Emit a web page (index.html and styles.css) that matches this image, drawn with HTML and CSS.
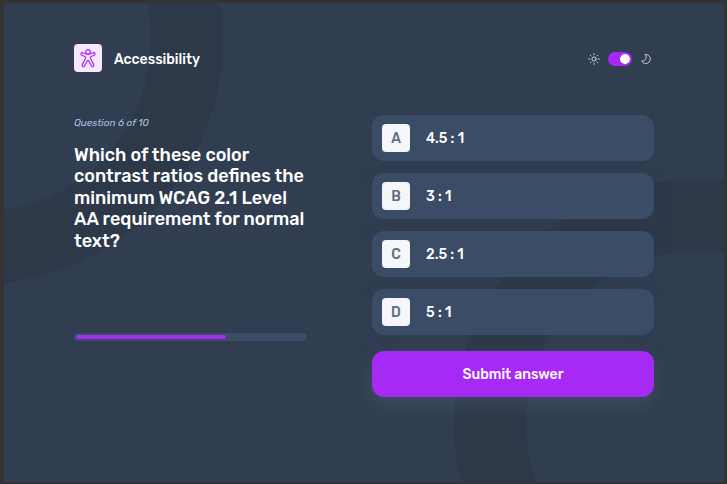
FILE: index.html
```html
<!DOCTYPE html>
<html lang="en">
<head>
<meta charset="utf-8">
<title>Accessibility quiz</title>
<link rel="stylesheet" href="styles.css">
</head>
<body>
<div class="app">
  <svg class="backdrop" viewBox="0 0 720 479" aria-hidden="true">
    <circle cx="-25" cy="37" r="208"/>
    <circle cx="694" cy="420" r="208"/>
  </svg>
  <header class="header">
    <div class="subject">
      <span class="subject-icon">
        <svg viewBox="0 0 28 28" aria-hidden="true">
          <circle cx="14" cy="8" r="2.3"/>
          <path d="M11.6 9.8 8.7 8.7C7 8.2 6.2 10.5 7.8 11.2L10.9 12.5C11.7 12.9 11.8 13.6 11.5 14.5L8.3 20.6C7.6 22.4 9.8 23.3 10.6 21.7L13.5 16.7Q14 15.8 14.5 16.7L17.4 21.7C18.2 23.3 20.4 22.4 19.7 20.6L16.5 14.5C16.2 13.6 16.3 12.9 17.1 12.5L20.2 11.2C21.8 10.5 21 8.2 19.3 8.7L16.4 9.8Q14 10.7 11.6 9.8Z"/>
        </svg>
      </span>
      <span class="subject-name">Accessibility</span>
    </div>
    <div class="theme">
      <svg class="theme-icon" viewBox="0 0 12 12" aria-hidden="true">
        <circle cx="6" cy="6" r="2.1"/>
        <path d="M6 .6v1.2M6 10.2v1.2M.6 6h1.2M10.2 6h1.2M2.2 2.2l.8.8M9 9l.8.8M9.8 2.2 9 3M3 9l-.8.8"/>
      </svg>
      <span class="switch"><span class="knob"></span></span>
      <svg class="theme-icon" viewBox="0 0 12 12" aria-hidden="true">
        <path d="M5.5 1.7C8 1.1 10.3 3.3 10.3 5.9 10.3 8.6 8.3 10.5 5.8 10.5 4 10.5 2.4 9.5 1.8 7.9 3.3 8.2 4.7 7.7 5.5 6.3 6.4 4.8 6.3 3.1 5.5 1.7Z"/>
      </svg>
    </div>
  </header>
  <main class="main">
    <section class="question">
      <p class="count">Question 6 of 10</p>
      <h1 class="title">Which of these color<br>contrast ratios defines the<br>minimum WCAG 2.1 Level<br>AA requirement for normal<br>text?</h1>
      <div class="progress"><div class="bar"></div></div>
    </section>
    <section class="answers">
      <div class="option"><span class="letter">A</span><span class="value">4.5 : 1</span></div>
      <div class="option"><span class="letter">B</span><span class="value">3 : 1</span></div>
      <div class="option"><span class="letter">C</span><span class="value">2.5 : 1</span></div>
      <div class="option"><span class="letter">D</span><span class="value">5 : 1</span></div>
      <button class="submit">Submit answer</button>
    </section>
  </main>
</div>
</body>
</html>
```
FILE: styles.css
```css
* { box-sizing: border-box; margin: 0; }
body {
  background: #333;
  padding: 3px 3px 2px 4px;
  height: 484px;
  overflow: hidden;
  font-family: Rubik, Roboto, sans-serif;
  font-weight: 500;
  color: #fff;
}
.app {
  position: relative;
  width: 720px;
  height: 479px;
  padding: 41.4px 70px 0;
  background: #313e51;
  overflow: hidden;
}
.backdrop { position: absolute; inset: 0; width: 720px; height: 479px; }
.backdrop circle { fill: none; stroke: #2d3949; stroke-width: 72; }
.header { position: relative; display: flex; justify-content: space-between; align-items: center; height: 28px; }
.subject { display: flex; align-items: center; gap: 12px; }
.subject-icon { width: 28px; height: 28px; border-radius: 4px; background: #f6e7ff; }
.subject-icon svg { display: block; width: 28px; height: 28px; fill: none; stroke: #a729f5; stroke-width: 1.2; stroke-linejoin: round; }
.subject-name { padding-top: 2px; font-size: 14px; }
.theme { display: flex; align-items: center; gap: 8px; margin-right: 1.6px; padding-top: .4px; }
.theme-icon { width: 12px; height: 12px; fill: none; stroke: #dce5f0; stroke-width: .85; stroke-linecap: round; stroke-linejoin: round; }
.switch { display: flex; justify-content: flex-end; align-items: center; width: 24px; height: 14px; padding: 2px; border-radius: 7px; background: #a729f5; }
.knob { width: 10px; height: 10px; border-radius: 50%; background: #fff; }
.main { position: relative; display: flex; justify-content: space-between; margin-top: 42.6px; }
.question { width: 232.5px; }
.count { margin-top: 1px; font-size: 10px; line-height: 15px; font-style: italic; font-weight: 400; color: #abc1e1; }
.title { margin-top: 13px; padding-top: .7px; font-size: 18px; line-height: 21.5px; font-weight: 500; white-space: nowrap; }
.progress { height: 8px; margin-top: 80.8px; padding: 2px; border-radius: 4px; background: #3b4d66; }
.bar { width: 150px; height: 4px; border-radius: 2px; background: #a729f5; }
.answers { width: 282px; display: flex; flex-direction: column; gap: 12px; }
.option { display: flex; align-items: center; gap: 16px; height: 46px; padding: 0 10px; border-radius: 12px; background: #3b4d66; box-shadow: 0 8px 20px rgba(49, 62, 81, .14); }
.letter { display: grid; place-items: center; width: 28px; height: 28px; padding-top: 3px; border-radius: 4px; background: #f4f6fa; color: #626c7f; font-size: 14px; line-height: 16px; }
.value { padding-top: 2px; font-size: 14px; }
.submit { height: 46px; margin-top: 4px; padding-top: 2px; border: 0; border-radius: 12px; background: #a729f5; color: #fff; font: inherit; font-size: 14px; box-shadow: 0 8px 20px rgba(92, 116, 133, .27); }
```
